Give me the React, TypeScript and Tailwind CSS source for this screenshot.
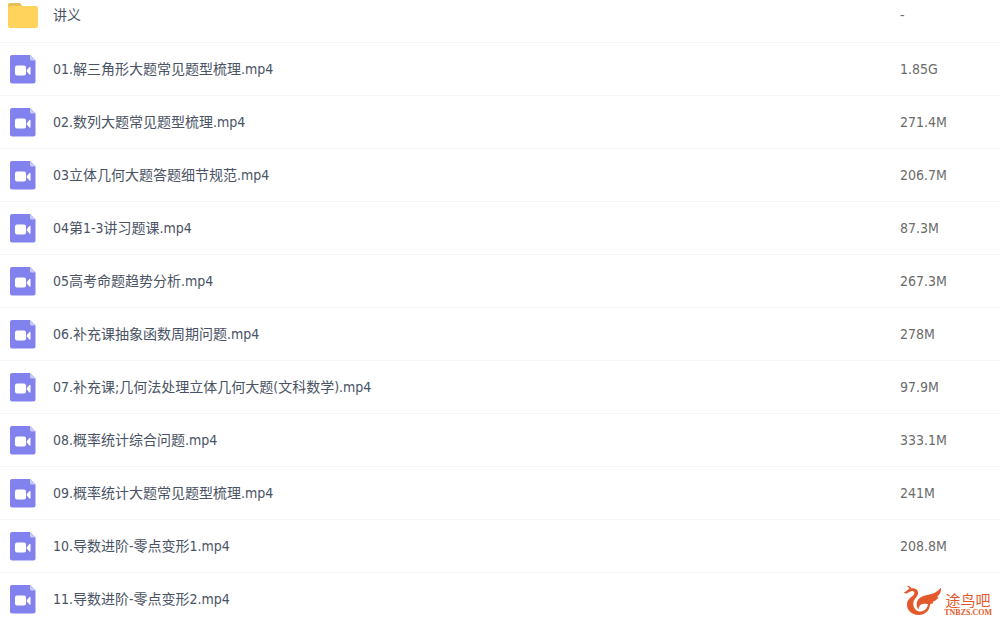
interface FileItem {
  name: string;
  size: string;
  type: "folder" | "video";
}

const files: FileItem[] = [
  { name: "讲义", size: "-", type: "folder" },
  { name: "01.解三角形大题常见题型梳理.mp4", size: "1.85G", type: "video" },
  { name: "02.数列大题常见题型梳理.mp4", size: "271.4M", type: "video" },
  { name: "03立体几何大题答题细节规范.mp4", size: "206.7M", type: "video" },
  { name: "04第1-3讲习题课.mp4", size: "87.3M", type: "video" },
  { name: "05高考命题趋势分析.mp4", size: "267.3M", type: "video" },
  { name: "06.补充课抽象函数周期问题.mp4", size: "278M", type: "video" },
  { name: "07.补充课;几何法处理立体几何大题(文科数学).mp4", size: "97.9M", type: "video" },
  { name: "08.概率统计综合问题.mp4", size: "333.1M", type: "video" },
  { name: "09.概率统计大题常见题型梳理.mp4", size: "241M", type: "video" },
  { name: "10.导数进阶-零点变形1.mp4", size: "208.8M", type: "video" },
  { name: "11.导数进阶-零点变形2.mp4", size: "", type: "video" },
];

const FolderIcon = () => (
  <svg width="32" height="26" viewBox="0 0 32 26" aria-hidden="true">
    <path d="M1 3a2 2 0 0 1 2-2h9q1.500 0 2.200 1.500L15.500 5v5H1z" fill="#e8bf55" />
    <rect x="1" y="4" width="30" height="22" rx="2" fill="#ffd35c" />
  </svg>
);

const VideoIcon = () => (
  <svg width="26" height="31" viewBox="0 -2 26 31" aria-hidden="true">
    <path d="M2 0h18l5.500 5.500V26.500a2 2 0 0 1-2 2H2a2 2 0 0 1-2-2V2a2 2 0 0 1 2-2z" fill="#8282ee" />
    <path d="M20 0l5.500 5.500H21.500a1.500 1.500 0 0 1-1.500-1.500z" fill="#c9c8fa" />
    <rect x="5" y="10.500" width="11" height="10" rx="2" fill="#fff" />
    <path d="M16.800 15l2.700-3q1-.8 1 .5v6.500q0 1.300-1 .5l-2.700-3z" fill="#fff" />
  </svg>
);

const SiteLogo = () => (
  <div className="absolute right-2 bottom-1 flex items-end text-[#e4592b]">
    <svg width="42" height="33" viewBox="0 0 42 33" fill="currentColor" aria-hidden="true">
      {/* crest */}
      <path d="M5 2.200c2-.8 3.900.2 4.500 2.300L7.700 5.200C7.300 4 6.500 3 5 2.200z" />
      {/* head, neck and the bottom of the body */}
      <path d="M1.500 8.500C4.500 8.500 5.500 4.300 10.300 4.300c4 0 6.400 2.700 5.700 5.700-.7 3.100-4.500 5-4.700 9.200-.2 4.800 3 8.300 7.200 8.300 4.500 0 7.500-3.500 7.500-9l2-.8c.8 7.300-3.900 13.300-11.400 13.300C9.500 31 4.800 26.300 5 20.600c.1-5 3.700-6.800 6.300-9.300 1.900-1.900 1.200-4.300-1.300-4.300-3.300 0-4.300 4.300-8.500 1.500z" />
      {/* wing, sweeping up to the right */}
      <path d="M16.500 25.500c-2.600-3.300-2.400-8.200.6-11 2.700-2.500 6-2.900 9.400-3.700 4.700-1.100 9-2.600 12.500-7.300.4 4-1.200 7.200-4 9.500l1.600.2c-1.700 2.500-3.800 4-6.300 4.800l1.400.8c-2 1.300-4.200 1.700-6.300 1.300-2.600-.4-5-.8-6.700.6-1.300 1.100-2 2.700-2.200 4.800z" />
    </svg>
    <div className="flex flex-col items-center">
      <span className="font-['Noto_Sans_CJK_SC',sans-serif] text-[15px] leading-4">途鸟吧</span>
      <span className="font-['Liberation_Serif',serif] text-[8px] leading-[9px] font-bold">TNBZS.COM</span>
    </div>
  </div>
);

const FileRow = ({ name, size, type }: FileItem) => (
  <tr className="h-[53px] border-b border-[#f3f5f9]">
    <td className="p-0">
      <div className="flex items-center">
        <span className="flex w-[46px] shrink-0 justify-center">
          {type === "folder" ? <FolderIcon /> : <VideoIcon />}
        </span>
        <span className="pl-[7px] text-[#4a5364]">{name}</span>
      </div>
    </td>
    <td className="p-0 text-[#6b6b6b]">{size}</td>
  </tr>
);

const App: React.FC = () => {
  return (
    <main className="relative h-screen overflow-hidden bg-white font-['DejaVu_Sans_Condensed','Noto_Sans_CJK_SC',sans-serif] text-sm">
      <table className="-mt-[11px] w-full table-fixed border-collapse">
        <colgroup>
          <col />
          <col className="w-[100px]" />
        </colgroup>
        <tbody>
          {files.map((file) => (
            <FileRow key={file.name} {...file} />
          ))}
        </tbody>
      </table>
      <SiteLogo />
    </main>
  );
};

export default App;
